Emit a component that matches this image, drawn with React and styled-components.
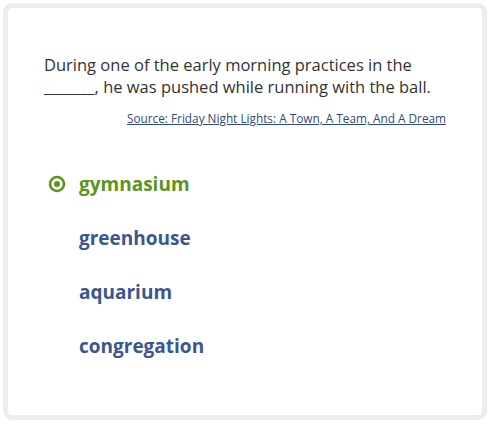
import React from "react";
import styled, { createGlobalStyle } from "styled-components";

const GlobalStyle = createGlobalStyle`
  body {
    margin: 0;
    background: #ffffff;
    font-family: "Open Sans", "Liberation Sans", sans-serif;
  }
`;

const Page = styled.div`
  padding: 3px 8px 7px 3px;
  width: 495px;
  height: 427px;
  box-sizing: border-box;
`;

const Card = styled.div`
  box-sizing: border-box;
  width: 484px;
  height: 417px;
  border: 5px solid #ededed;
  border-radius: 9px;
  background: #fff;
  padding: 46px 36px 0 36px;
`;

const Passage = styled.p`
  margin: 0;
  font-size: 16.5px;
  line-height: 22px;
  color: #333333;
`;

const Source = styled.a`
  display: block;
  margin-top: 12px;
  text-align: right;
  font-size: 11.8px;
  line-height: 16px;
  color: #2e4a7d;
  text-decoration: underline;
`;

const Choices = styled.ul`
  list-style: none;
  margin: 46px 0 0 0;
  padding: 0;
  display: flex;
  flex-direction: column;
  gap: 30px;
`;

const Choice = styled.li`
  display: flex;
  align-items: center;
  height: 24px;
  font-size: 19px;
  font-weight: 700;
  color: ${(props) => (props.selected ? "#5b961b" : "#3a5690")};
`;

const Mark = styled.span`
  width: 35px;
  display: flex;
  align-items: center;
  padding-left: 4px;
  box-sizing: border-box;
`;

const choices = ["gymnasium", "greenhouse", "aquarium", "congregation"];

export default function App() {
  return (
    <Page>
      <GlobalStyle />
      <Card>
        <Passage>
          During one of the early morning practices in the _______, he was
          pushed while running with the ball.
        </Passage>
        <Source href="#">Source: Friday Night Lights: A Town, A Team, And A Dream</Source>
        <Choices>
          {choices.map((c, i) => (
            <Choice key={c} selected={i === 0}>
              <Mark>
                {i === 0 && (
                  <svg width="18" height="18" viewBox="0 0 18 18">
                    <circle cx="9" cy="9" r="7" fill="none" stroke="#5b961b" strokeWidth="2.6" />
                    <circle cx="9" cy="9" r="3" fill="#5b961b" />
                  </svg>
                )}
              </Mark>
              {c}
            </Choice>
          ))}
        </Choices>
      </Card>
    </Page>
  );
}
